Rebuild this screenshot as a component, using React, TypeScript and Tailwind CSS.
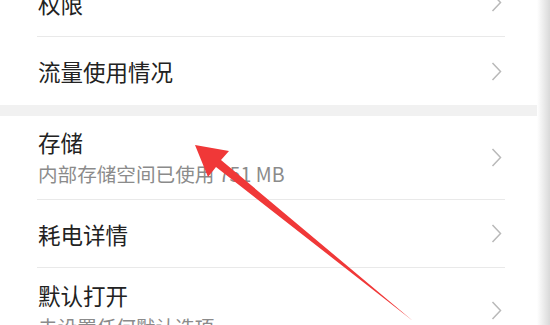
import React from 'react'

interface Row {
  title: string
  sub?: string
}

function Chevron() {
  return (
    <svg width="11" height="19" viewBox="0 0 11 19" className="shrink-0" aria-hidden>
      <polyline points="1.5,1 9.5,9.5 1.5,18" fill="none" stroke="#b9b9b9" strokeWidth="1.5" />
    </svg>
  )
}

function SettingRow({ row, last, top }: { row: Row; last?: boolean; top?: boolean }) {
  return (
    <div className={`pl-[37px] pr-[32px] ${top ? '-mt-[31px]' : ''}`}>
      <div
        className={`flex items-center justify-between pl-[1px] pr-[3px] ${
          last ? '' : 'border-b border-[#e9e9e9]'
        } ${row.sub ? 'h-[84px]' : 'h-[68px]'}`}
      >
        <div className="flex flex-col">
          <span className="text-[22.5px] leading-[28px] text-[#222222]">{row.title}</span>
          {row.sub && (
            <span className="mt-[5px] text-[19.6px] leading-[26px] text-[#8b8b8b]">{row.sub}</span>
          )}
        </div>
        <Chevron />
      </div>
    </div>
  )
}

export default function App() {
  return (
    <div
      className="relative flex w-[550px] h-[325px] overflow-hidden bg-white"
      style={{ fontFamily: '"Noto Sans CJK SC", "Noto Sans", sans-serif' }}
    >
      <div className="flex-1 flex flex-col">
        <SettingRow row={{ title: '权限' }} top />
        <SettingRow row={{ title: '流量使用情况' }} last />
        <div className="h-[11px] bg-[#f1f1f1] shrink-0" />
        <SettingRow row={{ title: '存储', sub: '内部存储空间已使用 751 MB' }} />
        <SettingRow row={{ title: '耗电详情' }} />
        <SettingRow row={{ title: '默认打开', sub: '未设置任何默认选项' }} last />
      </div>
      <div className="w-[13px] shrink-0 bg-gradient-to-r from-white to-[#d9d9d9]" />

      <svg className="absolute inset-0 pointer-events-none" width="550" height="325" viewBox="0 0 550 325" aria-hidden>
        <polygon
          points="195,145 229,151 221,160 413,321 216,167 208,177"
          fill="#f03838"
        />
      </svg>
    </div>
  )
}
